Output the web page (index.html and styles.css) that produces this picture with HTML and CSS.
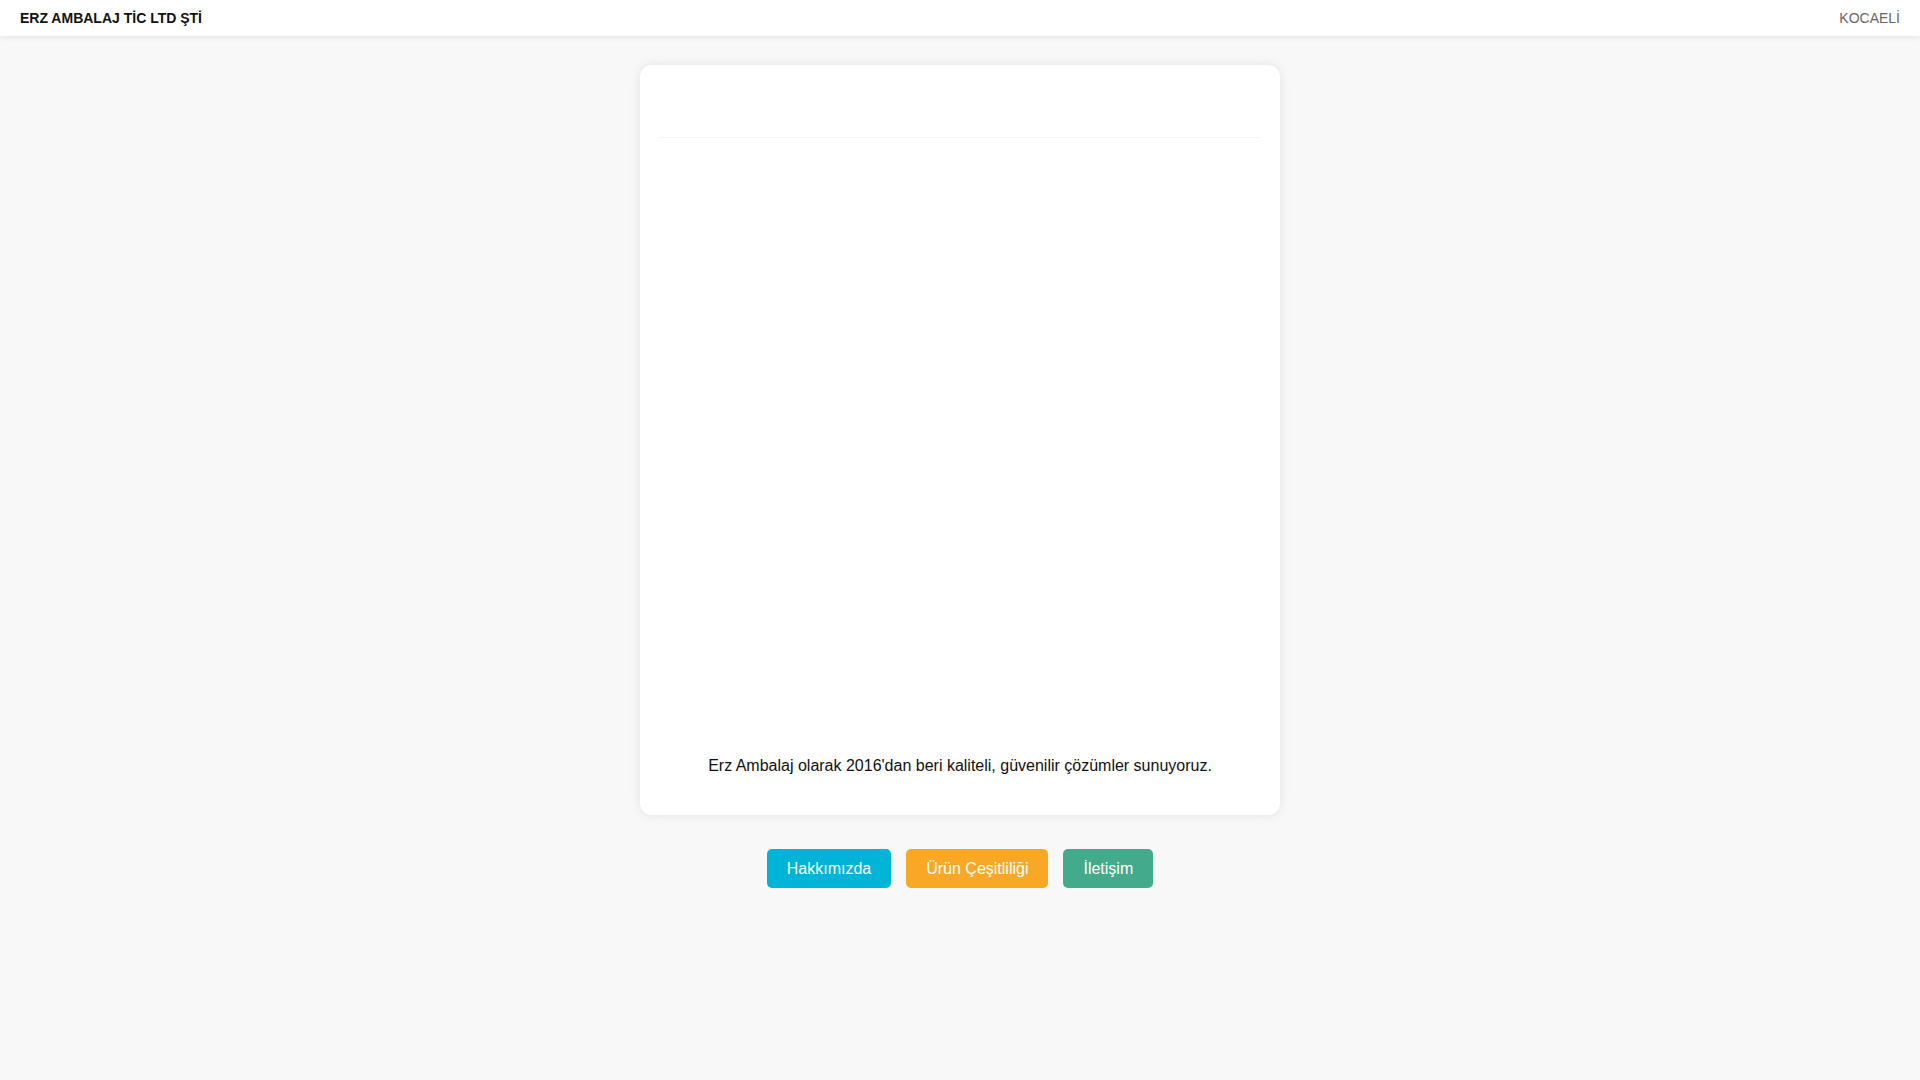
FILE: index.html
```html
<!DOCTYPE html>
<html lang="tr">
<head>
<meta charset="utf-8">
<title>ERZ AMBALAJ TİC LTD ŞTİ</title>
<link rel="stylesheet" href="styles.css">
</head>
<body>
<header class="topbar">
  <div class="brand">ERZ AMBALAJ TİC LTD ŞTİ</div>
  <div class="city">KOCAELİ</div>
</header>
<main class="main">
  <section class="card">
    <div class="card-head"></div>
    <div class="card-media"></div>
    <p class="card-text">Erz Ambalaj olarak 2016'dan beri kaliteli, güvenilir çözümler sunuyoruz.</p>
  </section>
  <nav class="actions">
    <a class="btn btn-cyan" href="#">Hakkımızda</a>
    <a class="btn btn-orange" href="#">Ürün Çeşitliliği</a>
    <a class="btn btn-green" href="#">İletişim</a>
  </nav>
</main>
</body>
</html>
```
FILE: styles.css
```css
* { box-sizing: border-box; }
html, body { margin: 0; padding: 0; }
body {
  background: #f8f8f8;
  font-family: "Liberation Sans", Arial, sans-serif;
  color: #111;
  min-height: 100vh;
}
.topbar {
  height: 36px;
  background: #fff;
  display: flex;
  align-items: center;
  justify-content: space-between;
  padding: 0 20px;
  box-shadow: 0 2px 5px rgba(0,0,0,0.07);
  position: relative;
}
.brand {
  font-size: 14px;
  font-weight: bold;
  color: #111;
}
.city {
  font-size: 14px;
  color: #666;
}
.main {
  display: flex;
  flex-direction: column;
  align-items: center;
  padding-top: 29px;
}
.card {
  width: 640px;
  background: #fff;
  border-radius: 12px;
  box-shadow: 0 0 12px rgba(0,0,0,0.09);
  padding: 20px 20px 40px;
}
.card-head {
  height: 53px;
  border-bottom: 1px solid #f3f3f3;
}
.card-media {
  height: 619px;
}
.card-text {
  margin: 0;
  text-align: center;
  font-size: 16px;
  line-height: 18px;
  color: #111;
}
.actions {
  display: flex;
  gap: 15px;
  margin-top: 34px;
}
.btn {
  display: block;
  padding: 10px 20px;
  font-size: 16px;
  line-height: 19px;
  color: #fff;
  text-decoration: none;
  border-radius: 5px;
}
.btn-cyan { background: #00b4d8; }
.btn-orange { background: #f9a826; }
.btn-green { background: #43aa8b; }
```
